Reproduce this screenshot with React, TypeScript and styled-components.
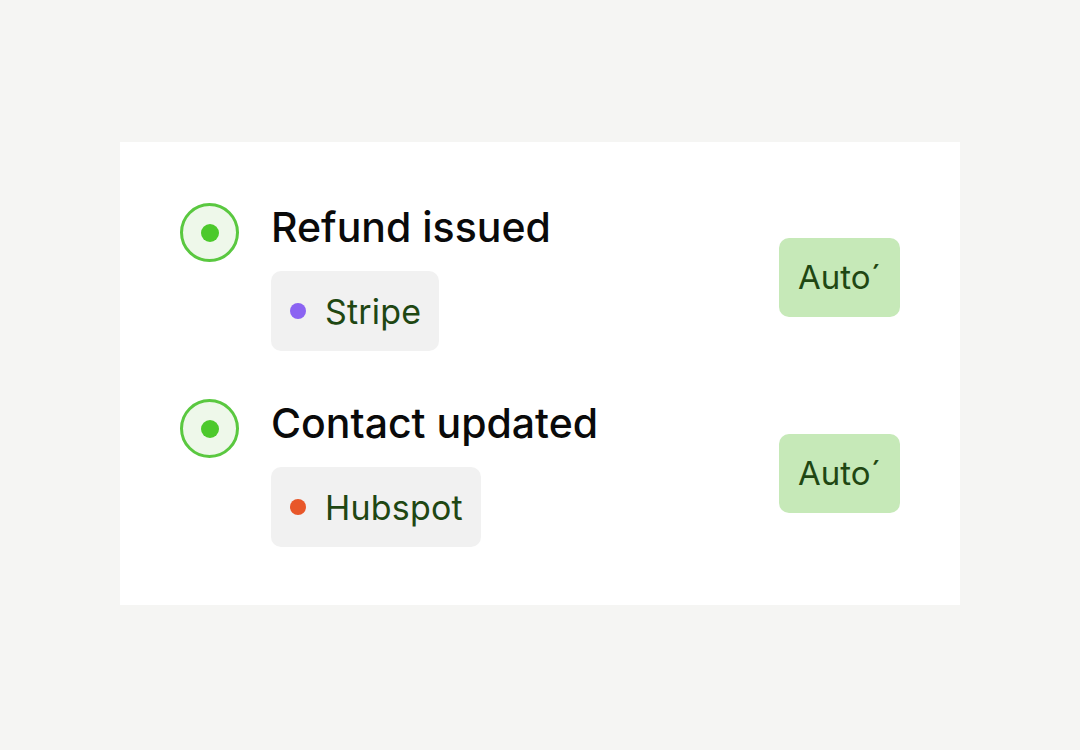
import React from "react";
import styled, { createGlobalStyle } from "styled-components";

const GlobalStyle = createGlobalStyle`
  html, body {
    margin: 0;
    padding: 0;
    background: #f5f5f3;
    font-family: Inter, "Noto Sans", sans-serif;
  }
`;

type Event = {
  title: string;
  source: string;
  dot: string;
};

const events: Event[] = [
  { title: "Refund issued", source: "Stripe", dot: "#8b63f2" },
  { title: "Contact updated", source: "Hubspot", dot: "#e8572a" },
];

const App: React.FC = () => {
  return (
    <>
      <GlobalStyle />
      <Page>
        <Card>
          {events.map((ev) => (
            <Row key={ev.title}>
              <Left>
                <StatusRing>
                  <StatusDot />
                </StatusRing>
                <Info>
                  <Title>{ev.title}</Title>
                  <Chip>
                    <ChipDot $color={ev.dot} />
                    {ev.source}
                  </Chip>
                </Info>
              </Left>
              <AutoBadge>{"Auto\u00b4"}</AutoBadge>
            </Row>
          ))}
        </Card>
      </Page>
    </>
  );
};

const Page = styled.div`
  width: 1080px;
  height: 750px;
  padding: 142px 120px 0;
  box-sizing: border-box;
`;

const Card = styled.div`
  background: #ffffff;
  height: 463px;
  box-sizing: border-box;
  padding: 61px 60px 0;
  display: flex;
  flex-direction: column;
  gap: 48px;
`;

const Row = styled.div`
  display: flex;
  align-items: center;
  justify-content: space-between;
`;

const Left = styled.div`
  display: flex;
  align-items: flex-start;
  gap: 32px;
`;

const StatusRing = styled.div`
  width: 59px;
  height: 59px;
  box-sizing: border-box;
  border-radius: 50%;
  border: 3px solid #5ac840;
  background: #eef8ea;
  display: flex;
  align-items: center;
  justify-content: center;
`;

const StatusDot = styled.div`
  width: 18px;
  height: 18px;
  border-radius: 50%;
  background: #4cc92c;
`;

const Info = styled.div`
  display: flex;
  flex-direction: column;
  align-items: flex-start;
`;

const Title = styled.div`
  font-size: 41px;
  font-weight: 500;
  line-height: 48px;
  color: #0a0a0a;
  margin-bottom: 20px;
`;

const Chip = styled.div`
  height: 80px;
  box-sizing: border-box;
  padding: 0 18px 0 19px;
  border-radius: 10px;
  background: #f1f1f1;
  display: flex;
  align-items: center;
  gap: 19px;
  font-size: 34px;
  letter-spacing: 0.2px;
  color: #1f4713;
`;

const ChipDot = styled.span<{ $color: string }>`
  width: 16px;
  height: 16px;
  border-radius: 50%;
  background: ${(p) => p.$color};
`;

const AutoBadge = styled.div`
  width: 121px;
  height: 79px;
  border-radius: 10px;
  background: #c6e9b8;
  display: flex;
  align-items: center;
  justify-content: center;
  font-size: 33px;
  color: #1f4713;
`;

export default App;
